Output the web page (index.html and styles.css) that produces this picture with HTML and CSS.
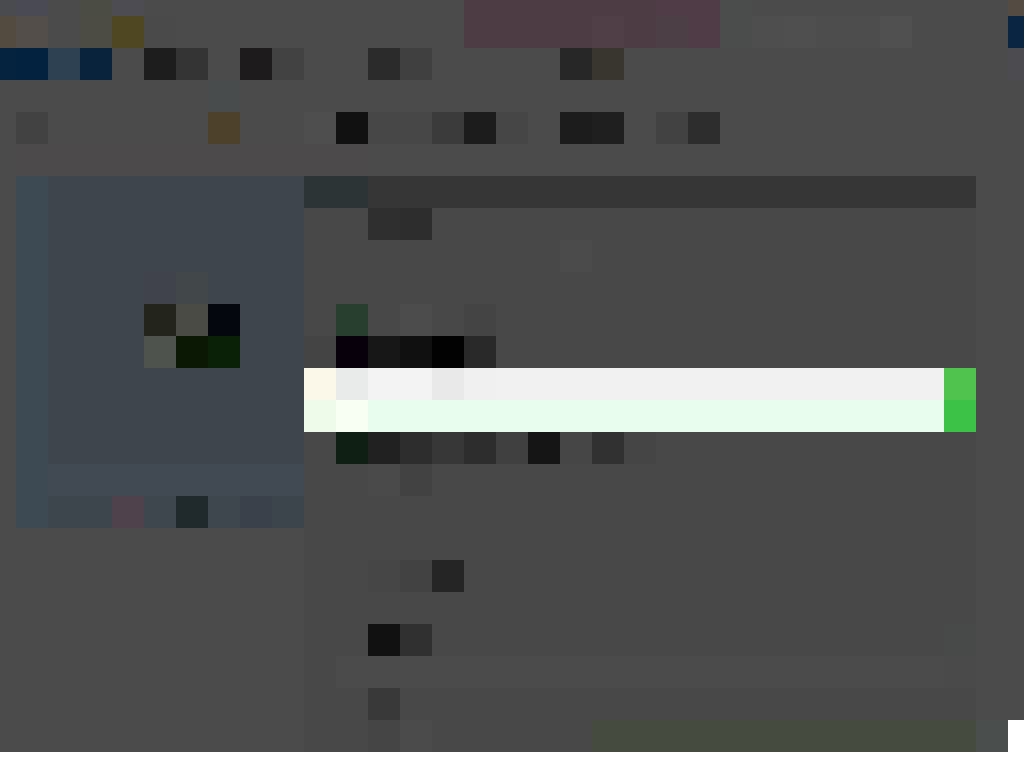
FILE: index.html
```html
<!DOCTYPE html>
<html lang="en">
<head>
<meta charset="utf-8">
<title>Mosaic</title>
<link rel="stylesheet" href="styles.css">
</head>
<body>
<main class="mosaic">
<div class="row half"><i class="c-4a4b4f"></i><i class="c-4a4a55"></i><i></i><i class="c-4b4c44"></i><i class="c-4e4c53"></i><i class="s10"></i><i class="s6 c-4e3c44"></i><i class="s2 c-503c46"></i><i class="c-4a4d4b"></i><i class="s8"></i><i class="c-544c42"></i></div>
<div class="row"><i class="c-534b3f"></i><i class="c-534e4a"></i><i></i><i class="c-4c4c44"></i><i class="c-4f4722"></i><i class="c-4a4a4a"></i><i class="s9"></i><i class="s4 c-4e3c44"></i><i class="c-503f47"></i><i class="c-4e3c44"></i><i class="c-4c3f46"></i><i class="c-503c46"></i><i class="c-4a4d4b"></i><i class="c-4d4e4d"></i><i class="c-4f4f4f"></i><i class="s2 c-4c4d4c"></i><i class="c-505050"></i><i class="s3"></i><i class="c-0a2542"></i></div>
<div class="row"><i class="c-05223f"></i><i class="c-03223f"></i><i class="c-2e4152"></i><i class="c-09233c"></i><i></i><i class="c-1d1d1d"></i><i class="c-343434"></i><i></i><i class="c-1d1b1c"></i><i class="c-424242"></i><i class="s2"></i><i class="c-2b2b2b"></i><i class="c-414040"></i><i class="s4"></i><i class="c-272727"></i><i class="c-38362f"></i><i class="s12"></i><i class="c-4c4c50"></i></div>
<div class="row"><i></i><i class="s6"></i><i class="c-484c4c"></i></div>
<div class="row"><i></i><i class="c-424242"></i><i class="s5"></i><i class="c-4e412c"></i><i class="s2"></i><i class="c-4e4e4e"></i><i class="c-111111"></i><i class="s2 c-474747"></i><i class="c-3b3b3b"></i><i class="c-1c1c1c"></i><i class="c-464646"></i><i></i><i class="c-1c1c1c"></i><i class="c-1f1f1f"></i><i></i><i class="c-424242"></i><i class="c-2d2d2d"></i></div>
<div class="row"><i></i><i class="s11 c-4c4a4a"></i></div>
<div class="row"><i></i><i class="c-3d4a53"></i><i class="s8 c-3e454d"></i><i class="s2 c-2c3435"></i><i class="s19 c-363636"></i></div>
<div class="row"><i></i><i class="c-3d4a53"></i><i class="s8 c-3e454d"></i><i class="s2 c-484848"></i><i class="c-2f2f2f"></i><i class="c-2d2d2d"></i><i class="s17 c-484848"></i></div>
<div class="row"><i></i><i class="c-3d4a53"></i><i class="s8 c-3e454d"></i><i class="s8 c-484848"></i><i class="c-4b4b4b"></i><i class="s12 c-484848"></i></div>
<div class="row"><i></i><i class="c-3d4a53"></i><i class="s3 c-3e454d"></i><i class="c-40424c"></i><i class="c-42474a"></i><i class="c-3f454d"></i><i class="s2 c-3e454d"></i><i class="s21 c-484848"></i></div>
<div class="row"><i></i><i class="c-3d4a53"></i><i class="s3 c-3e454d"></i><i class="c-23251c"></i><i class="c-4a4b44"></i><i class="c-04070e"></i><i class="s2 c-3e454d"></i><i class="c-484848"></i><i class="c-283f30"></i><i class="c-484848"></i><i class="c-4c4c4c"></i><i class="c-484848"></i><i class="c-444444"></i><i class="s15 c-484848"></i></div>
<div class="row"><i></i><i class="c-3d4a53"></i><i class="s3 c-3e454d"></i><i class="c-4e534e"></i><i class="c-0b1803"></i><i class="c-0a2107"></i><i class="s2 c-3e454d"></i><i class="c-444444"></i><i class="c-08000a"></i><i class="c-171717"></i><i class="c-101010"></i><i class="c-020202"></i><i class="c-292929"></i><i class="s15 c-484848"></i></div>
<div class="row"><i></i><i class="c-3d4a53"></i><i class="s8 c-3e454d"></i><i class="c-fcf8e9"></i><i class="c-e9ebea"></i><i class="s2 c-f3f3f3"></i><i class="c-e9e9e9"></i><i class="c-f0f0f0"></i><i class="s14 c-f1f1f1"></i><i class="c-4fc34d"></i></div>
<div class="row"><i></i><i class="c-3d4a53"></i><i class="s8 c-3e454d"></i><i class="c-eefbeb"></i><i class="c-f8fff3"></i><i class="s18 c-e8fded"></i><i class="c-3cc347"></i></div>
<div class="row"><i></i><i class="c-3d4a53"></i><i class="s8 c-3e454d"></i><i class="c-484848"></i><i class="c-0f1f13"></i><i class="c-212121"></i><i class="c-2d2d2d"></i><i class="c-373737"></i><i class="c-2d2d2d"></i><i class="c-404040"></i><i class="c-141514"></i><i class="c-464646"></i><i class="c-313131"></i><i class="c-454545"></i><i class="s10 c-484848"></i></div>
<div class="row"><i></i><i class="c-3d4a53"></i><i class="s8 c-414a52"></i><i class="s2 c-484848"></i><i class="c-4a4a4a"></i><i class="c-424242"></i><i class="s17 c-484848"></i></div>
<div class="row"><i></i><i class="c-3d4a53"></i><i class="s2 c-3e464d"></i><i class="c-50424c"></i><i class="c-3e464e"></i><i class="c-20292c"></i><i class="c-3e464e"></i><i class="c-3a414b"></i><i class="c-3c444c"></i><i class="s21 c-484848"></i></div>
<div class="row"><i></i><i class="s9"></i><i class="s21 c-484848"></i></div>
<div class="row"><i></i><i class="s9"></i><i class="s2 c-484848"></i><i class="c-464646"></i><i class="c-424242"></i><i class="c-252525"></i><i class="s16 c-484848"></i></div>
<div class="row"><i></i><i class="s9"></i><i class="s21 c-484848"></i></div>
<div class="row"><i></i><i class="s9"></i><i class="s2 c-484848"></i><i class="c-111111"></i><i class="c-303030"></i><i class="s16 c-484848"></i><i class="c-484a49"></i></div>
<div class="row"><i></i><i class="s9"></i><i class="c-484848"></i><i class="s19 c-4b4b4b"></i><i class="c-4a4a4a"></i></div>
<div class="row"><i></i><i class="s9"></i><i class="s2 c-484848"></i><i class="c-393939"></i><i class="s18 c-484848"></i></div>
<div class="row"><i></i><i class="s9"></i><i class="s2 c-484848"></i><i class="c-454545"></i><i class="c-4b4b4b"></i><i class="s5 c-484848"></i><i class="s12 c-454b3e"></i><i class="c-4a4f4e"></i><i class="c-ffffff"></i></div>
</main>
</body>
</html>
```

FILE: styles.css
```css
html, body { margin: 0; padding: 0; background: #ffffff; }
.mosaic { display: flex; flex-direction: column; width: 1024px; overflow: hidden; }
.row { display: grid; grid-template-columns: 16px repeat(31, 32px) 16px; height: 32px; background: #4b4b4b; }
.row.half { height: 16px; }
.row i { display: block; }
.s2 { grid-column: span 2; } .s3 { grid-column: span 3; } .s4 { grid-column: span 4; }
.s5 { grid-column: span 5; } .s6 { grid-column: span 6; } .s8 { grid-column: span 8; }
.s9 { grid-column: span 9; } .s10 { grid-column: span 10; } .s11 { grid-column: span 11; }
.s12 { grid-column: span 12; } .s14 { grid-column: span 14; } .s15 { grid-column: span 15; }
.s16 { grid-column: span 16; } .s17 { grid-column: span 17; } .s18 { grid-column: span 18; }
.s19 { grid-column: span 19; } .s21 { grid-column: span 21; }
.c-020202{background:#020202}.c-03223f{background:#03223f}.c-04070e{background:#04070e}.c-05223f{background:#05223f}
.c-08000a{background:#08000a}.c-09233c{background:#09233c}.c-0a2107{background:#0a2107}.c-0a2542{background:#0a2542}
.c-0b1803{background:#0b1803}.c-0f1f13{background:#0f1f13}.c-101010{background:#101010}.c-111111{background:#111111}
.c-141514{background:#141514}.c-171717{background:#171717}.c-1c1c1c{background:#1c1c1c}.c-1d1b1c{background:#1d1b1c}
.c-1d1d1d{background:#1d1d1d}.c-1f1f1f{background:#1f1f1f}.c-20292c{background:#20292c}.c-212121{background:#212121}
.c-23251c{background:#23251c}.c-252525{background:#252525}.c-272727{background:#272727}.c-283f30{background:#283f30}
.c-292929{background:#292929}.c-2b2b2b{background:#2b2b2b}.c-2c3435{background:#2c3435}.c-2d2d2d{background:#2d2d2d}
.c-2e4152{background:#2e4152}.c-2f2f2f{background:#2f2f2f}.c-303030{background:#303030}.c-313131{background:#313131}
.c-343434{background:#343434}.c-363636{background:#363636}.c-373737{background:#373737}.c-38362f{background:#38362f}
.c-393939{background:#393939}.c-3a414b{background:#3a414b}.c-3b3b3b{background:#3b3b3b}.c-3c444c{background:#3c444c}
.c-3cc347{background:#3cc347}.c-3d4a53{background:#3d4a53}.c-3e454d{background:#3e454d}.c-3e464d{background:#3e464d}
.c-3e464e{background:#3e464e}.c-3f454d{background:#3f454d}.c-404040{background:#404040}.c-414040{background:#414040}
.c-40424c{background:#40424c}.c-414a52{background:#414a52}.c-424242{background:#424242}.c-42474a{background:#42474a}
.c-444444{background:#444444}.c-454545{background:#454545}.c-454b3e{background:#454b3e}.c-464646{background:#464646}
.c-474747{background:#474747}.c-484848{background:#484848}.c-484a49{background:#484a49}.c-484c4c{background:#484c4c}
.c-4a4a4a{background:#4a4a4a}.c-4a4a55{background:#4a4a55}.c-4a4b44{background:#4a4b44}.c-4a4b4f{background:#4a4b4f}
.c-4a4d4b{background:#4a4d4b}.c-4a4f4e{background:#4a4f4e}.c-4b4b4b{background:#4b4b4b}.c-4b4c44{background:#4b4c44}
.c-4c3f46{background:#4c3f46}.c-4c4c44{background:#4c4c44}.c-4c4c4c{background:#4c4c4c}.c-4c4d4c{background:#4c4d4c}
.c-4c4a4a{background:#4c4a4a}.c-4d4e4d{background:#4d4e4d}.c-4e3c44{background:#4e3c44}.c-4e412c{background:#4e412c}
.c-4e4c53{background:#4e4c53}.c-4e4e4e{background:#4e4e4e}.c-4c4c50{background:#4c4c50}.c-4e534e{background:#4e534e}
.c-4f4722{background:#4f4722}.c-4f4f4f{background:#4f4f4f}.c-4fc34d{background:#4fc34d}.c-503f47{background:#503f47}
.c-50424c{background:#50424c}.c-505050{background:#505050}.c-503c46{background:#503c46}.c-534b3f{background:#534b3f}
.c-534e4a{background:#534e4a}.c-544c42{background:#544c42}.c-e8fded{background:#e8fded}.c-e9e9e9{background:#e9e9e9}
.c-e9ebea{background:#e9ebea}.c-eefbeb{background:#eefbeb}.c-f0f0f0{background:#f0f0f0}.c-f1f1f1{background:#f1f1f1}
.c-f3f3f3{background:#f3f3f3}.c-f8fff3{background:#f8fff3}.c-fcf8e9{background:#fcf8e9}.c-ffffff{background:#ffffff}
```
